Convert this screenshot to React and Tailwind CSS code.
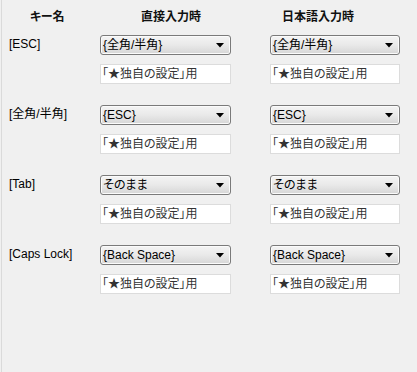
import React from "react"

const rows = [
    { key: "[ESC]", direct: "{全角/半角}", japanese: "{全角/半角}" },
    { key: "[全角/半角]", direct: "{ESC}", japanese: "{ESC}" },
    { key: "[Tab]", direct: "そのまま", japanese: "そのまま" },
    { key: "[Caps Lock]", direct: "{Back Space}", japanese: "{Back Space}" },
]

// Windows style combobox
const Combo = ({ value, width }) => (
    <div
        className={`${width} h-[20px] flex items-center justify-between rounded-[3px] border border-[#7a7a7a] bg-gradient-to-b from-[#f4f4f4] via-[#e9e9e9] to-[#d6d6d6] shadow-[inset_0_0_0_1px_#fbfbfb] pl-[2px] pr-[6px]`}
    >
        <span className="text-[12px] leading-none text-black">{value}</span>
        <svg width="8" height="5" viewBox="0 0 8 5" className="shrink-0">
            <path d="M0 0 H8 L4 4.5 Z" fill="#000" />
        </svg>
    </div>
)

const Field = ({ width }) => (
    <div className={`${width} h-[20px] flex items-center bg-white border border-[#dcdcdc] pl-[1px]`}>
        <span className="text-[12px] leading-none text-[#333]">「★独自の設定」用</span>
    </div>
)

const App = () => {
    return (
        <div
            className="w-[417px] h-[372px] bg-[#f0f0f0] pl-px overflow-hidden [font-feature-settings:'palt']"
            style={{ fontFamily: '"Liberation Sans", "Noto Sans CJK JP", sans-serif' }}
        >
            <div className="h-full border-l border-[#dadada]">
                {/* header */}
                <div className="flex h-[35px] pt-[9px] text-[12px] leading-[16px] font-bold text-[#111]">
                    <span className="ml-[28px] w-[111px]">キー名</span>
                    <span className="w-[141px]">直接入力時</span>
                    <span>日本語入力時</span>
                </div>

                {/* rows */}
                <div className="flex flex-col gap-[21px]">
                    {rows.map((row) => (
                        <div key={row.key} className="flex">
                            <div className="w-[98px] pl-[7px] pt-[2px] text-[12px] leading-[14px] text-black">
                                {row.key}
                            </div>
                            <div className="flex flex-col gap-[9px]">
                                <Combo value={row.direct} width="w-[131px]" />
                                <Field width="w-[131px]" />
                            </div>
                            <div className="flex flex-col gap-[9px] ml-[39px]">
                                <Combo value={row.japanese} width="w-[130px]" />
                                <Field width="w-[130px]" />
                            </div>
                        </div>
                    ))}
                </div>
            </div>
        </div>
    )
}

export default App
